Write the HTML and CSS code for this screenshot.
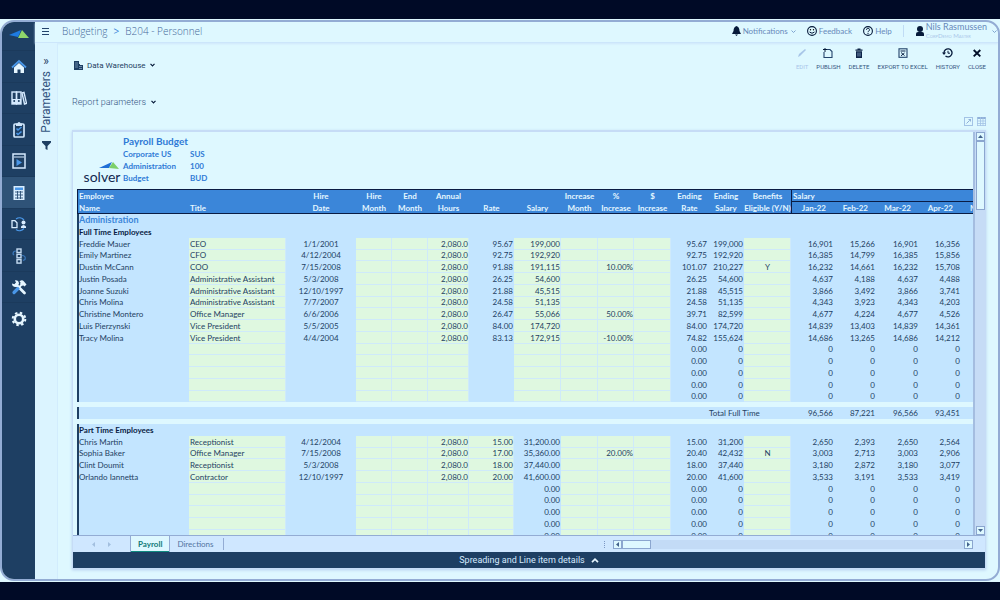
FILE: index.html
```
<!DOCTYPE html>
<html lang="en">
<head>
<meta charset="utf-8">
<title>Budgeting - B204 Personnel</title>
<link rel="stylesheet" href="styles.css">
</head>
<body>
<div class="stage">
<div class="app">
  <nav class="rail" aria-label="Main">
    <a class="brand" href="#" aria-label="Home"><svg width="20" height="10" viewBox="0 0 20 10"><path d="M0 6L12 1 11 4 9 8Z" fill="#1f7be0"/><path d="M13 1L20 9H9Z" fill="#8fd66b"/></svg></a>
    <a class="rail-item" href="#" aria-label="Dashboard"><svg width="16" height="16" viewBox="0 0 16 16"><path d="M3 8.500L8 4l5 4.500V14H9.500v-3.500h-3V14H3z" fill="#e6f6ff"/><path d="M1 8.500L8 2l7 6.500" fill="none" stroke="#4a97e8" stroke-width="1.800"/></svg></a>
    <a class="rail-item" href="#" aria-label="Archive"><svg width="16" height="16" viewBox="0 0 16 16"><g fill="none" stroke="#d5eaff" stroke-width="1.400"><rect x="1" y="2" width="4.500" height="12"/><rect x="5.500" y="2" width="4.500" height="12"/><path d="M11 3l2-.6 2.500 11-2 .6z"/></g><path d="M1 9h9v5H1z" fill="#d5eaff"/><circle cx="3.200" cy="11" r="1" fill="#1e3f63"/><circle cx="7.800" cy="11" r="1" fill="#1e3f63"/></svg></a>
    <a class="rail-item" href="#" aria-label="Tasks"><svg width="16" height="18" viewBox="0 0 16 18"><rect x="3" y="3" width="10" height="13" rx="1" fill="none" stroke="#cfe6fb" stroke-width="1.700"/><path d="M5 5V2.500h1.500a1.500 1.500 0 0 1 3 0H11V5z" fill="#cfe6fb"/><path d="M5.500 7.500L7 9l3.500-3M5.500 12L7 13.500l3.500-3" fill="none" stroke="#4a97e8" stroke-width="1.600"/></svg></a>
    <a class="rail-item" href="#" aria-label="Reports"><svg width="16" height="16" viewBox="0 0 16 16"><rect x="2" y="1" width="12" height="14" fill="none" stroke="#d5eaff" stroke-width="1.500"/><path d="M3 4h10" stroke="#d5eaff"/><path d="M5.500 6l5.500 3.500L5.500 13z" fill="#4a97e8"/></svg></a>
    <a class="rail-item active" href="#" aria-label="Budgeting" aria-current="page"><svg width="16" height="16" viewBox="0 0 16 16"><rect x="2.500" y="1" width="11" height="14" fill="#d9edff"/><path d="M4 2.500h8v2.500H4z" fill="#4a97e8"/><path d="M4 7h8M4 10h8M4 13h8M6.500 6v8M9.500 6v8" stroke="#2c5077" stroke-width=".9"/></svg></a>
    <a class="rail-item" href="#" aria-label="Workflow"><svg width="16" height="16" viewBox="0 0 16 16"><path d="M5 3a6 6 0 0 1 8 1M5 13.500a6 6 0 0 0 8-1" fill="none" stroke="#4a97e8" stroke-width="1.200"/><path d="M1 4.700h3l2 2v5H1z" fill="none" stroke="#d9edff" stroke-width="1.300"/><circle cx="12.500" cy="6.500" r="2" fill="#d9edff"/><path d="M10 12v-1.500q2.500-3 5 0V12z" fill="#d9edff"/></svg></a>
    <a class="rail-item" href="#" aria-label="Process"><svg width="16" height="18" viewBox="0 0 16 18"><g fill="none" stroke="#c5dcf2" stroke-width="1.400"><rect x="6" y="2" width="4" height="3.500"/><rect x="6" y="7.300" width="4" height="3.500"/><rect x="6" y="12.600" width="4" height="3.500"/></g><path d="M5 4q-3 0-3 3l1 1M11 8.500q4 0 3 4l-2 1" fill="none" stroke="#3b78bb" stroke-width="1.200"/></svg></a>
    <a class="rail-item" href="#" aria-label="Tools"><svg width="16" height="16" viewBox="0 0 16 16"><path d="M5 5.500l8.500 8.500" stroke="#e6f6ff" stroke-width="2.800" stroke-linecap="round"/><path d="M1 4.500l2.500.8L5 4 4 1.300Q7.500.8 8 4.500 6.500 8.500 4 8 1 7.500 1 4.500z" fill="#e6f6ff"/><path d="M7 9.500L3 13.500" stroke="#4a97e8" stroke-width="3.200" stroke-linecap="round"/><path d="M7.800 8.500l3-3" stroke="#e6f6ff" stroke-width="1.800"/><path d="M8.500 2.500Q11 0 13 2.500l2.500 3-2 2-1.500-1.200-1 .7-2-2 .7-1.200z" fill="#e6f6ff"/></svg></a>
    <a class="rail-item" href="#" aria-label="Settings"><svg width="16" height="16" viewBox="0 0 16 16"><circle cx="8" cy="8" r="4.200" fill="none" stroke="#e6f6ff" stroke-width="2.600"/><circle cx="8" cy="8" r="6.300" fill="none" stroke="#e6f6ff" stroke-width="2" stroke-dasharray="2.480 2.480"/></svg></a>
  </nav>
  <div class="main">
    <header class="topbar">
      <button class="plain menu" aria-label="Menu"><svg width="7" height="7" viewBox="0 0 7 7"><path d="M0 .5h7M0 3.500h7M0 6.500h7" stroke="#23436b"/></svg></button>
      <div class="crumbs"><a href="#">Budgeting</a><span class="sep">&gt;</span><span>B204 - Personnel</span></div>
      <div class="account">
        <button class="plain tool"><svg width="9" height="10" viewBox="0 0 9 10"><path d="M4.500 0Q7.500 1 7.500 5L9 8H0l1.500-3Q1.500 1 4.500 0zM3 8.500h3L4.500 10z" fill="#061a3a"/></svg>Notifications<svg class="caret" width="5" height="3" viewBox="0 0 5 3"><path d="M.5.5l2 2 2-2" fill="none" stroke="#7fa5d0"/></svg></button>
        <button class="plain tool"><svg width="10" height="10" viewBox="0 0 10 10"><circle cx="5" cy="5" r="4.400" fill="none" stroke="#061a3a" stroke-width="1.100"/><circle cx="3.500" cy="3.800" r=".7"/><circle cx="6.500" cy="3.800" r=".7"/><path d="M2.500 6q2.500 2.500 5 0" fill="none" stroke="#061a3a"/></svg>Feedback</button>
        <button class="plain tool"><svg width="10" height="10" viewBox="0 0 10 10"><circle cx="5" cy="5" r="4.400" fill="none" stroke="#061a3a" stroke-width="1.100"/><path d="M3.500 3.800a1.500 1.500 0 1 1 2 1.400q-.5.200-.5 1M5 7v1" fill="none" stroke="#061a3a"/></svg>Help</button>
        <span class="rule"></span>
        <button class="plain user"><svg width="8" height="10" viewBox="0 0 8 10"><circle cx="4" cy="3" r="3" fill="#061a3a"/><path d="M0 10V8q0-2 2-2h4q2 0 2 2v2z" fill="#061a3a"/></svg><span class="who"><span class="name">Nils Rasmussen</span><span class="org">CorpDemo Master</span></span><svg class="caret" width="5" height="3" viewBox="0 0 5 3"><path d="M.5.5l2 2 2-2" fill="none" stroke="#7fa5d0"/></svg></button>
      </div>
    </header>
    <div class="body">
      <aside class="params">
        <button class="plain expand" aria-label="Expand">»</button>
        <span class="params-label">Parameters</span>
        <svg width="9" height="9" viewBox="0 0 9 9"><path d="M0 0h9v1.500L5.500 5v4l-2-1V5L0 1.500z" fill="#1e3f63"/></svg>
      </aside>
      <main class="content">
        <div class="actions">
          <button class="plain source"><svg width="9" height="9" viewBox="0 0 9 9"><path d="M0 0h5v3h1v1h3v5H0z" fill="#1e3f63"/><path d="M1 2h3M1 4h3M1 6h3M5 5.500h3M5 7.500h3" stroke="#9fc0df" stroke-width=".6"/></svg>Data Warehouse<svg width="5" height="4" viewBox="0 0 5 4"><path d="M.5.800l2 2 2-2" fill="none" stroke="#061a3a" stroke-width="1.200"/></svg></button>
          <div class="buttons">
            <button class="plain act" disabled><svg width="10" height="10" viewBox="0 0 10 10"><path d="M1 9l1-3 6-5 1 1-6 6z" fill="#a8c6e8"/></svg>EDIT</button>
            <button class="plain act"><svg width="10" height="10" viewBox="0 0 10 10"><path d="M3 1.500h4L9 3.500v6H1V4" fill="none" stroke="#23436b" stroke-width="1.100"/><path d="M0 1.500h4M2 0v4" stroke="#061a3a"/></svg>PUBLISH</button>
            <button class="plain act"><svg width="10" height="10" viewBox="0 0 10 10"><path d="M1.500 1.500h7v1.200h-7zM3.500.5h3v1h-3zM2 3.200h6V10H2z" fill="#0c2347"/><path d="M4 4.500v4M6 4.500v4" stroke="#a8c6e8" stroke-width=".7"/></svg>DELETE</button>
            <button class="plain act"><svg width="10" height="10" viewBox="0 0 10 10"><rect x="1" y=".8" width="8" height="8.500" fill="none" stroke="#23436b" stroke-width="1.100"/><path d="M2.500 3h5M3 4.500l3.500 3M6.500 5L3 7.800" stroke="#0c2347"/></svg>EXPORT TO EXCEL</button>
            <button class="plain act"><svg width="11" height="10" viewBox="0 0 11 10"><path d="M2 5a4 4 0 1 1 1.500 3" fill="none" stroke="#061a3a" stroke-width="1.300"/><path d="M0 4.500h4L2 7z" fill="#061a3a"/><path d="M6 2.800V5.200h2" fill="none" stroke="#061a3a"/></svg>HISTORY</button>
            <button class="plain act"><svg width="10" height="10" viewBox="0 0 10 10"><path d="M1.700 2l6.600 6.400M8.300 2L1.700 8.400" stroke="#030f28" stroke-width="1.900"/></svg>CLOSE</button>
          </div>
        </div>
        <div class="subbar">
          <button class="plain report">Report parameters<svg width="5" height="4" viewBox="0 0 5 4"><path d="M.5.800l2 2 2-2" fill="none" stroke="#061a3a" stroke-width="1.200"/></svg></button>
          <div class="view">
            <button class="plain" aria-label="Full screen"><svg width="9" height="9" viewBox="0 0 9 9"><rect x=".5" y=".5" width="8" height="8" fill="none" stroke="#a3c3e6"/><path d="M2.500 6.500l3-3" stroke="#8fb0d8"/><path d="M4 2h3v3z" fill="#8fb0d8"/></svg></button>
            <button class="plain" aria-label="Grid view"><svg width="9" height="9" viewBox="0 0 9 9"><path d="M0 1h9" stroke="#8fb0d8" stroke-width="2"/><path d="M.5 0v9M3.500 0v9M6 0v9M8.500 0v9M0 4h9M0 6.500h9M0 8.500h9" stroke="#a3c3e6" stroke-width=".8"/></svg></button>
          </div>
        </div>
        <section class="sheet">
          <div class="viewport">
            <div class="grid">
              <div class="title">
                <div class="logo"><svg width="20" height="8" viewBox="0 0 20 8"><path d="M0 6L13 0 11 4 10 6Z" fill="#1f6fd6"/><path d="M14 0L20 7 10 6Z" fill="#7ccf6a"/></svg><span>solver</span></div>
                <div class="heading">
                  <h1>Payroll Budget</h1>
                  <dl><dt>Corporate US</dt><dd>SUS</dd><dt>Administration</dt><dd>100</dd><dt>Budget</dt><dd>BUD</dd></dl>
                </div>
              </div>
              <table class="ledger">
                <colgroup><col class="w-name"><col class="w-title"><col class="w-date"><col class="w-36"><col class="w-36"><col class="w-41"><col class="w-45"><col class="w-47"><col class="w-37"><col class="w-36"><col class="w-37"><col class="w-37"><col class="w-36"><col class="w-47"><col class="w-47"><col class="w-42"><col class="w-43"><col class="w-42"><col class="w-43"></colgroup>
                <thead>
                  <tr><th class="left">Employee</th><th></th><th>Hire</th><th>Hire</th><th>End</th><th>Annual</th><th></th><th></th><th>Increase</th><th>%</th><th>$</th><th>Ending</th><th>Ending</th><th>Benefits</th><th class="left span" colspan="5">Salary</th></tr>
                  <tr><th class="left">Name</th><th class="left">Title</th><th>Date</th><th>Month</th><th>Month</th><th>Hours</th><th>Rate</th><th>Salary</th><th>Month</th><th>Increase</th><th>Increase</th><th>Rate</th><th>Salary</th><th>Eligible (Y/N)</th><th class="month first">Jan-22</th><th class="month">Feb-22</th><th class="month">Mar-22</th><th class="month">Apr-22</th><th class="month">May-22</th></tr>
                </thead>
                <tbody id="rows"></tbody>
              </table>
            </div>
            <div class="vscroll"><button class="plain arrow" aria-label="Scroll up"><svg width="5" height="3" viewBox="0 0 5 3"><path d="M0 3h5L2.500 0z" fill="#42628c"/></svg></button><div class="vthumb"></div><div class="grow"></div><button class="plain arrow" aria-label="Scroll down"><svg width="5" height="3" viewBox="0 0 5 3"><path d="M0 0h5L2.500 3z" fill="#42628c"/></svg></button></div>
          </div>
          <div class="tabs">
            <span class="steps"><svg width="3" height="5" viewBox="0 0 3 5"><path d="M3 0v5L0 2.500z" fill="#a3bfdf"/></svg><svg width="3" height="5" viewBox="0 0 3 5"><path d="M0 0v5l3-2.500z" fill="#a3bfdf"/></svg></span>
            <button class="plain tab on">Payroll</button><button class="plain tab">Directions</button><span class="tab-rule"></span>
            <div class="hscroll"><span class="grip"></span><button class="plain arrow" aria-label="Scroll left"><svg width="3" height="5" viewBox="0 0 3 5"><path d="M3 0v5L0 2.500z" fill="#42628c"/></svg></button><div class="hthumb"></div><div class="grow"></div><button class="plain arrow" aria-label="Scroll right"><svg width="3" height="5" viewBox="0 0 3 5"><path d="M0 0v5l3-2.500z" fill="#42628c"/></svg></button></div>
          </div>
          <button class="plain details">Spreading and Line item details<svg width="8" height="5" viewBox="0 0 8 5"><path d="M1 4.200l3-3 3 3" fill="none" stroke="#e6f6ff" stroke-width="1.700"/></svg></button>
        </section>
      </main>
    </div>
  </div>
</div>
</div>
<script src="rows.js"></script>
</body>
</html>
```
FILE: styles.css
```
* { box-sizing: border-box; }
body { margin: 0; height: 100vh; padding: 19px 0 18px; display: flex; overflow: hidden; background: #000a26; font-family: Roboto, "Liberation Sans", sans-serif; color: #1e3f63; }
.stage { flex: 1; min-width: 0; min-height: 0; display: flex; padding: 1px 0; background: #def8ff; }
.app { flex: 1; min-width: 0; min-height: 0; display: flex; background: #def8ff; border: 2px solid #93acd4; border-radius: 14px; overflow: hidden; }
.plain { border: 0; background: none; padding: 0; margin: 0; font: inherit; color: inherit; cursor: pointer; }
svg { display: block; flex: none; }
a { color: inherit; text-decoration: none; }

.rail { width: 33px; flex: none; background: #1e3f63; }
.brand { height: 28px; display: flex; align-items: center; justify-content: center; padding-bottom: 4px; }
.rail-item { height: 32px; display: flex; align-items: center; justify-content: center; border-top: 1px solid #1b3a5c; }
.rail-item:nth-child(odd) { height: 31px; }
.rail-item.active { background: #2f5378; }

.main { flex: 1; min-width: 0; min-height: 0; display: flex; flex-direction: column; }
.topbar { height: 21px; flex: none; display: flex; align-items: center; padding: 0 1px 2px 7px; border-bottom: 1px solid #cce6fb; box-shadow: 0 1px 2px #cfe6fb; }
.crumbs { display: flex; gap: 6px; margin-left: 13px; font: 300 10px "Open Sans", sans-serif; color: #46699a; }
.crumbs .sep { color: #3b86d9; font-weight: 400; }
.account { margin-left: auto; display: flex; align-items: center; font-family: Lato, sans-serif; font-size: 8px; color: #6789ba; }
.tool { display: flex; align-items: center; gap: 2px; margin-right: 11px; }
.tool .caret { margin-left: 1px; }
.rule { width: 1px; height: 12px; background: #c0dcf5; margin-right: 12px; }
.user { display: flex; align-items: center; gap: 2px; text-align: left; }
.user .caret { margin-left: 3px; }
.who { display: flex; flex-direction: column; }
.name { font-size: 9px; line-height: 10px; }
.org { font-size: 6px; line-height: 8px; font-variant: small-caps; color: #a9c6ea; }

.body { flex: 1; min-height: 0; display: flex; }
.params { width: 23px; flex: none; display: flex; flex-direction: column; align-items: center; background: #dbf4ff; border-right: 1px solid #d2ecfd; padding-top: 11px; }
.expand { font-size: 12px; line-height: 14px; }
.params-label { writing-mode: vertical-rl; transform: rotate(180deg); font-size: 12px; line-height: 14px; margin: 3px 0 8px; color: #34557f; }

.content { flex: 1; min-width: 0; min-height: 0; display: flex; flex-direction: column; padding: 5px 12px 10px 14px; }
.actions { flex: none; display: flex; justify-content: space-between; height: 34px; }
.source { display: flex; align-items: center; gap: 4px; font-size: 8px; margin-left: 2px; }
.buttons { display: flex; align-items: flex-start; gap: 8px; }
.act { display: flex; flex-direction: column; align-items: center; gap: 5px; font-size: 6px; line-height: 8px; color: #34557f; }
.act:disabled { color: #a9c6ea; }
.subbar { flex: none; display: flex; justify-content: space-between; height: 48px; }
.report { display: flex; align-items: center; align-self: flex-start; gap: 5px; padding-top: 14px; font-size: 9px; line-height: 12px; font-weight: 300; color: #34557f; }
.view { display: flex; gap: 4px; align-self: flex-end; padding-bottom: 4px; }

.sheet { flex: 1; min-height: 0; display: flex; flex-direction: column; border: 1px solid #c6dcf6; border-top-width: 2px; box-shadow: 0 1px 3px #b5cdee; }
.viewport { flex: 1; min-height: 0; display: flex; }
.grid { flex: 1; min-width: 0; overflow: hidden; padding-left: 4px; font-family: Lato, "Liberation Sans", sans-serif; }
.title { display: flex; height: 57px; padding: 3px 0 0 4px; color: #2f7ad6; }
.logo { width: 42px; display: flex; flex-direction: column; justify-content: flex-end; align-items: center; }
.logo svg { margin-left: 14px; }
.logo span { font-size: 14px; line-height: 13px; color: #12294f; padding-bottom: 6px; }
h1 { margin: 0; font-size: 10px; line-height: 13px; }
dl { margin: 0; display: grid; grid-template-columns: 67px auto; font-size: 8px; line-height: 12px; font-weight: 700; }
dd { margin: 0; }

.ledger { table-layout: fixed; border-collapse: separate; border-spacing: 0; width: 931px; font-size: 8px; line-height: 12px; border-top: 1px solid #0a1c44; }
.w-name { width: 112px; } .w-title { width: 97px; } .w-date { width: 70px; }
.w-36 { width: 36px; } .w-37 { width: 37px; } .w-41 { width: 41px; } .w-42 { width: 42px; } .w-43 { width: 43px; } .w-45 { width: 45px; } .w-47 { width: 47px; }
th, td { padding: 0 1px; height: 12px; white-space: nowrap; text-align: right; }
th { background: #3b86d9; color: #e4f6ff; text-align: center; font-weight: 700; padding: 0; }
th.left { text-align: left; padding-left: 1px; }
thead tr:last-child th { box-shadow: inset 0 -1px #0a1c44; }
thead th:first-child { border-left: 1px solid #0a1c44; }
th.span { border-left: 1px solid #0a1c44; box-shadow: inset 0 -1px #0a1c44; }
th.month { text-align: right; padding-right: 12px; }
th.month:last-child { text-align: left; padding: 0 0 0 5px; }
th.first { border-left: 1px solid #0a1c44; }
td { background: #c3e5ff; }
td:first-child { border-left: 2px solid #1e3f63; padding-left: 0; }
tr.short td { height: 11px; line-height: 11px; }
td.text { text-align: left; }
td.mid { text-align: center; }
td.month { padding-right: 5px; }
td.edit { background: #dff8e0; box-shadow: inset -1px -1px #cfeafa; }
td.total { text-align: left; }
td.dept { font-weight: 700; font-size: 9px; color: #3b86d9; }
td.group { font-weight: 700; color: #0a1c44; }
tr.gap td { height: 5px; line-height: 5px; background: #def8ff; border: 0; }

.arrow { width: 9px; height: 9px; flex: none; display: flex; align-items: center; justify-content: center; border: 1px solid #8ba6cf; background: #def8ff; }
.grow { flex: 1; }
.vscroll { width: 12px; flex: none; display: flex; flex-direction: column; align-items: center; background: #c6dcf6; border-left: 2px solid #a4bde0; }
.vthumb { width: 9px; height: 69px; border: 1px solid #8ba6cf; background: #def8ff; }
.tabs { height: 17px; flex: none; display: flex; align-items: stretch; background: #cfe7ff; border-top: 1px solid #93acd4; font: 8px Lato, sans-serif; }
.steps { width: 57px; display: flex; align-items: center; justify-content: center; gap: 13px; }
.tab { padding: 0 7px; color: #52749f; }
.tab.on { background: #def8ff; color: #0f7a78; font-weight: 700; border: solid #93acd4; border-width: 0 1px; box-shadow: inset 0 -1px #0f8a80; }
.tab-rule { width: 1px; margin: 2px; background: #93acd4; }
.hscroll { width: 369px; margin-left: auto; margin-right: 12px; display: flex; align-items: center; background: #cfe7ff; }
.hscroll .grow { height: 9px; background: #c3dbf6; }
.grip { width: 9px; height: 7px; border-left: 1px dotted #7c98c4; }
.hthumb { width: 29px; height: 9px; border: 1px solid #8ba6cf; background: #def8ff; }
.details { height: 16px; flex: none; display: flex; align-items: center; justify-content: center; gap: 6px; background: #1e3f63; color: #d5eaff; font-size: 9px; }
```
FILE: rows.js
```
const COLUMNS = 19;
const FULL_EDIT = [1, 3, 4, 5, 7, 8, 9, 10, 13];
const PART_EDIT = [1, 3, 4, 5, 6, 8, 9, 10, 13];
const BLANK = [];

// name, title, hired, hours, rate, salary, % increase, ending rate, ending salary, benefits, months
const fullTime = [
  ["Freddie Mauer", "CEO", "1/1/2001", "2,080.0", "95.67", "199,000", "", "95.67", "199,000", "", "16,901", "15,266", "16,901", "16,356"],
  ["Emily Martinez", "CFO", "4/12/2004", "2,080.0", "92.75", "192,920", "", "92.75", "192,920", "", "16,385", "14,799", "16,385", "15,856"],
  ["Dustin McCann", "COO", "7/15/2008", "2,080.0", "91.88", "191,115", "10.00%", "101.07", "210,227", "Y", "16,232", "14,661", "16,232", "15,708"],
  ["Justin Posada", "Administrative Assistant", "5/3/2008", "2,080.0", "26.25", "54,600", "", "26.25", "54,600", "", "4,637", "4,188", "4,637", "4,488"],
  ["Joanne Suzuki", "Administrative Assistant", "12/10/1997", "2,080.0", "21.88", "45,515", "", "21.88", "45,515", "", "3,866", "3,492", "3,866", "3,741"],
  ["Chris Molina", "Administrative Assistant", "7/7/2007", "2,080.0", "24.58", "51,135", "", "24.58", "51,135", "", "4,343", "3,923", "4,343", "4,203"],
  ["Christine Montero", "Office Manager", "6/6/2006", "2,080.0", "26.47", "55,066", "50.00%", "39.71", "82,599", "", "4,677", "4,224", "4,677", "4,526"],
  ["Luis Pierzynski", "Vice President", "5/5/2005", "2,080.0", "84.00", "174,720", "", "84.00", "174,720", "", "14,839", "13,403", "14,839", "14,361"],
  ["Tracy Molina", "Vice President", "4/4/2004", "2,080.0", "83.13", "172,915", "-10.00%", "74.82", "155,624", "", "14,686", "13,265", "14,686", "14,212"],
  BLANK, BLANK, BLANK, BLANK, BLANK
];
const partTime = [
  ["Chris Martin", "Receptionist", "4/12/2004", "2,080.0", "15.00", "31,200.00", "", "15.00", "31,200", "", "2,650", "2,393", "2,650", "2,564"],
  ["Sophia Baker", "Office Manager", "7/15/2008", "2,080.0", "17.00", "35,360.00", "20.00%", "20.40", "42,432", "N", "3,003", "2,713", "3,003", "2,906"],
  ["Clint Doumit", "Receptionist", "5/3/2008", "2,080.0", "18.00", "37,440.00", "", "18.00", "37,440", "", "3,180", "2,872", "3,180", "3,077"],
  ["Orlando Iannetta", "Contractor", "12/10/1997", "2,080.0", "20.00", "41,600.00", "", "20.00", "41,600", "", "3,533", "3,191", "3,533", "3,419"],
  BLANK, BLANK, BLANK, BLANK, BLANK
];

const body = document.getElementById("rows");
let count = 0;

function addRow(cells, edit, classes = {}) {
  const tr = body.insertRow();
  count += 1;
  if (count % 4 === 0) tr.className = "short";
  for (let i = 0; i < COLUMNS; i++) {
    const td = tr.insertCell();
    td.textContent = cells[i] || "";
    if (classes[i]) td.classList.add(classes[i]);
    if (classes[i] === "total") {
      td.colSpan = 2;
      i += 1;
      continue;
    }
    if (i < 2) td.classList.add("text");
    if (i === 2 || i === 13) td.classList.add("mid");
    if (i > 13) td.classList.add("month");
    if (edit.includes(i)) td.classList.add("edit");
  }
}

function addGap() {
  const tr = body.insertRow();
  tr.className = "gap";
  tr.insertCell().colSpan = COLUMNS;
}

function addPeople(list, edit, blankSalary) {
  for (const p of list) {
    const cells = p === BLANK
      ? ["", "", "", "", "", "", "", blankSalary, "", "", "", "0.00", "0", "", "0", "0", "0", "0"]
      : [p[0], p[1], p[2], "", "", p[3], p[4], p[5], "", p[6], "", p[7], p[8], p[9], ...p.slice(10)];
    addRow(cells, edit);
  }
}

addRow(["Administration"], [], { 0: "dept" });
addRow(["Full Time Employees"], [], { 0: "group" });
addPeople(fullTime, FULL_EDIT, "");
addGap();
addRow(["", "", "", "", "", "", "", "", "", "", "", "", "Total Full Time", "", "96,566", "87,221", "96,566", "93,451"], [], { 12: "total" });
addGap();
addRow(["Part Time Employees"], [], { 0: "group" });
addPeople(partTime, PART_EDIT, "0.00");
```
